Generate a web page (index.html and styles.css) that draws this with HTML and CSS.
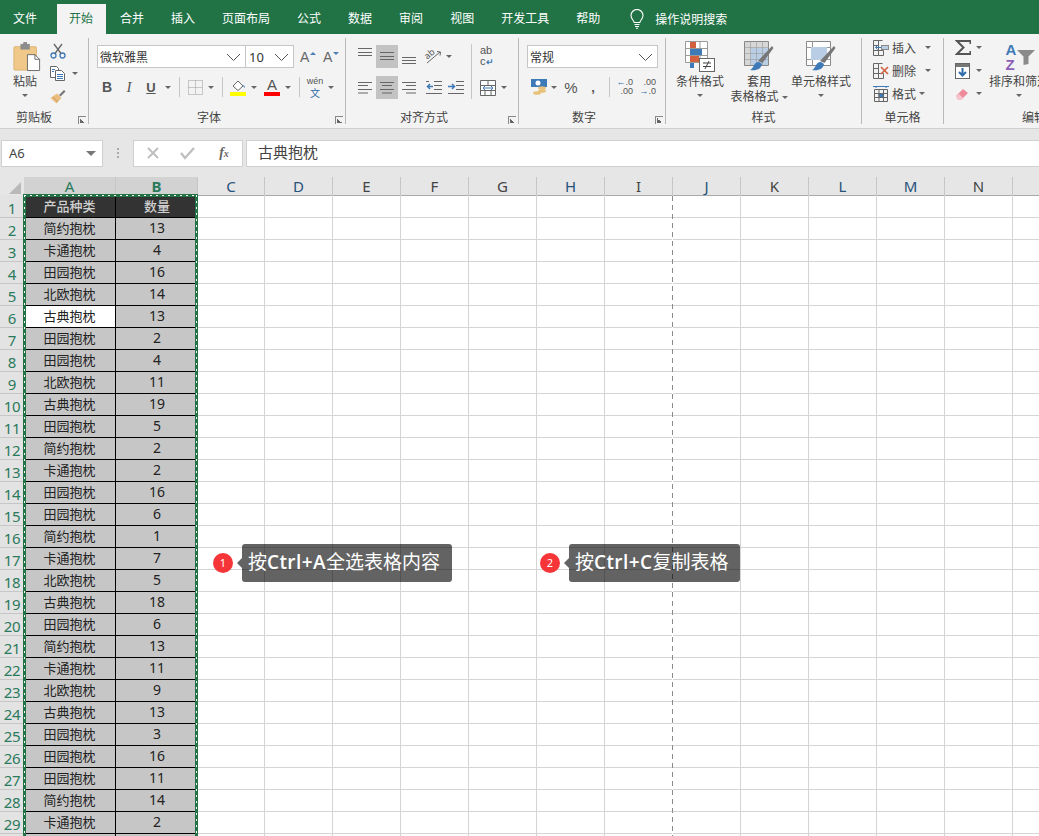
FILE: index.html
```html
<!DOCTYPE html>
<html lang="zh-CN">
<head>
<meta charset="utf-8">
<title>Excel</title>
<link rel="stylesheet" href="styles.css">
</head>
<body>
<div class="app">
<nav class="tabs">
  <span class="tab first">文件</span><span class="tab on">开始</span><span class="tab">合并</span><span class="tab">插入</span><span class="tab">页面布局</span><span class="tab">公式</span><span class="tab">数据</span><span class="tab">审阅</span><span class="tab">视图</span><span class="tab">开发工具</span><span class="tab">帮助</span>
  <span class="search">
    <svg width="14" height="20" viewBox="0 0 14 20" fill="none" stroke="#fff" stroke-width="1.1"><path d="M4.2 13.5C3.6 11 1 9.6 1 6.5a6 6 0 0 1 12 0c0 3.100-2.600 4.500-3.200 7z"/><path d="M4.500 15.500h5M5 17.500h4M6 19.300h2"/></svg>
    <span>操作说明搜索</span>
  </span>
</nav>

<section class="ribbon">
  <!-- 剪贴板 -->
  <div class="group g1">
    <div class="body flex">
      <div class="large paste">
        <svg width="28" height="30" viewBox="0 0 30 32"><rect x="1" y="5" width="24" height="25" rx="1" fill="#f0c98a" stroke="#dcb06a"/><rect x="8" y="2" width="10" height="6" fill="#8c8c8c"/><rect x="11" y="0" width="4" height="3" fill="#8c8c8c"/><path d="M15.500 13.500h8l5 5v12h-13z" fill="#fff" stroke="#666"/><path d="M23.500 13.500v5h5" fill="none" stroke="#666"/></svg>
        <span class="lbl">粘贴</span>
        <i class="caret"></i>
      </div>
      <div class="col clip-tools">
        <span class="tool"><svg width="16" height="16" viewBox="0 0 16 16" fill="none" stroke="#3f7ab8" stroke-width="1.300"><circle cx="3.500" cy="12.500" r="2.500"/><circle cx="12.500" cy="12.500" r="2.500"/><path d="M5 10.500 12 1M11 10.500 4 1" stroke="#666"/></svg></span>
        <span class="tool copy"><svg width="16" height="15" viewBox="0 0 16 15" fill="#fff" stroke="#666"><path d="M.500.500h6l2 2v9h-8z"/><path d="M5.500 4.500h6l3 3v7h-9z"/><path d="M7 8.500h6M7 10.500h6M7 12.500h6M2 3.500h3M2 5.500h2" stroke="#3f7ab8" fill="none"/></svg><i class="caret"></i></span>
        <span class="tool"><svg width="16" height="15" viewBox="0 0 16 15"><path d="M9 6 14 1l1.500 1.500-5 5z" fill="#777"/><path d="M.500 9 7 4.500l4.500 4.500-5 5.500z" fill="#e9bd7d"/><path d="M3 8 8 13" stroke="#c79d60"/></svg></span>
      </div>
    </div>
    <div class="label lab-clip">剪贴板</div>
    <i class="launcher"></i>
  </div>

  <!-- 字体 -->
  <div class="group g2">
    <div class="body pad8">
      <div class="line first-line">
        <span class="combo font">微软雅黑<svg class="chev" width="15" height="8" viewBox="0 0 15 8" fill="none" stroke="#555"><path d="M1 1l6.500 6.500L14 1"/></svg></span><span class="combo size">10<svg class="chev" width="15" height="8" viewBox="0 0 15 8" fill="none" stroke="#555"><path d="M1 1l6.500 6.500L14 1"/></svg></span>
        <span class="fontsize up">A</span><span class="fontsize down">A</span>
      </div>
      <div class="line second-line">
        <span class="c w20 fmt b">B</span><span class="c w24 fmt it">I</span><span class="c w20 fmt ul">U</span><span class="c w14"><i class="caret"></i></span><span class="c w8"><i class="vsep"></i></span>
        <span class="c w24"><svg width="15" height="15" viewBox="0 0 15 15" fill="none" stroke="#999" stroke-dasharray="1 1"><path d="M.500.500h14v14H.500zM7.500.500v14M.500 7.500h14"/></svg></span><span class="c w8"><i class="caret"></i></span><span class="c w14"><i class="vsep"></i></span>
        <span class="c w18"><svg width="17" height="17" viewBox="0 0 17 17"><path d="M3 7 8 2l5 5-5 4.500z" fill="#fff" stroke="#666"/><path d="M12 6c2 0 3 1 3 3z" fill="#3f7ab8"/><rect x="0" y="13" width="16" height="4" fill="#ffff00"/></svg></span><span class="c w14"><i class="caret"></i></span>
        <span class="c w22 colora"><span class="acolor">A</span></span><span class="c w10"><i class="caret"></i></span><span class="c w12"><i class="vsep"></i></span>
        <span class="c w20 wen"><span>wén</span><span class="wenz">文</span></span><span class="c w12"><i class="caret"></i></span>
      </div>
    </div>
    <div class="label lab-side">字体</div>
    <i class="launcher"></i>
  </div>

  <!-- 对齐方式 -->
  <div class="group g3">
    <div class="body flex pad8">
      <div class="alignleft">
        <div class="line first-line">
          <span class="c w22 a23"><svg width="14" height="23" viewBox="0 0 14 23" stroke="#666"><path d="M0 3.500h14M0 7.500h14M0 10.500h14"/></svg></span>
          <span class="c w22 a23 act"><svg width="14" height="23" viewBox="0 0 14 23" stroke="#666"><path d="M0 7.500h14M0 11.500h14M0 14.500h14"/></svg></span>
          <span class="c w22 a23"><svg width="14" height="23" viewBox="0 0 14 23" stroke="#666"><path d="M0 12.500h14M0 15.500h14M0 18.500h14"/></svg></span>
          <span class="c w26 a23"><svg class="orient" width="17" height="15" viewBox="0 0 17 15" fill="none" stroke="#666"><path d="M2 14 15 3M12 2.500l3.500.5-.5 3.500" stroke-width="1"/><text x="1" y="9" font-size="9" fill="#555" stroke="none" transform="rotate(-40 4 8)">ab</text></svg></span>
          <span class="c w6 a23"><i class="caret"></i></span>
        </div>
        <div class="line a-second">
          <span class="c w22 a23"><svg width="14" height="12" viewBox="0 0 14 12" stroke="#666"><path d="M0 .500h14M0 3.500h10M0 7.500h14M0 11h10"/></svg></span>
          <span class="c w22 a23 act"><svg width="14" height="12" viewBox="0 0 14 12" stroke="#666"><path d="M0 .500h14M2 3.500h10M0 7.500h14M2 11h10"/></svg></span>
          <span class="c w22 a23"><svg width="14" height="12" viewBox="0 0 14 12" stroke="#666"><path d="M0 .500h14M4 3.500h10M0 7.500h14M4 11h10"/></svg></span>
          <span class="c w28 a23"><svg width="16" height="13" viewBox="0 0 16 13" fill="none"><path d="M8 .500h8M8 4.500h8M8 8.500h8M0 12.500h16M0 .500h3" stroke="#666"/><path d="M7 5.500H2M4 3 1.500 5.500 4 8" stroke="#3f7ab8" stroke-width="1.500"/></svg></span>
          <span class="c w16 a23"><svg width="16" height="13" viewBox="0 0 16 13" fill="none"><path d="M8 .500h8M8 4.500h8M8 8.500h8M0 12.500h16" stroke="#666"/><path d="M0 5.500h6M4 3l2.500 2.500L4 8" stroke="#3f7ab8" stroke-width="1.500"/></svg></span>
        </div>
      </div>
      <i class="vsep tall"></i>
      <div class="alignright">
        <div class="line first-line">
          <span class="wrap">ab<br>c<b>↵</b></span>
        </div>
        <div class="line a-second">
          <span class="c w16 a23"><svg width="16" height="16" viewBox="0 0 16 16" fill="#fff" stroke="#666"><path d="M.500.500h15v15H.500zM.500 5.500h15M.500 10.500h15M8 .500v5M5 10.500v5M11 10.500v5"/><path d="M3 8h10M5 6l-2 2 2 2M11 6l2 2-2 2" stroke="#3f7ab8" fill="none"/></svg></span>
          <span class="c w16 a23"><i class="caret"></i></span>
        </div>
      </div>
    </div>
    <div class="label lab-side">对齐方式</div>
    <i class="launcher"></i>
  </div>

  <!-- 数字 -->
  <div class="group g4">
    <div class="body pad8">
      <div class="line first-line"><span class="combo num">常规<svg class="chev" width="15" height="8" viewBox="0 0 15 8" fill="none" stroke="#555"><path d="M1 1l6.500 6.500L14 1"/></svg></span></div>
      <div class="line second-line">
        <span class="c w24"><svg width="18" height="16" viewBox="0 0 18 16"><rect x="1" y="0" width="16" height="8" fill="#3f7ab8"/><circle cx="8" cy="4" r="2.500" fill="#fff"/><ellipse cx="12" cy="9" rx="4" ry="1.800" fill="#e8c27a"/><ellipse cx="12" cy="12" rx="4" ry="1.800" fill="#e8c27a"/><ellipse cx="7" cy="14" rx="4" ry="1.800" fill="#e8c27a"/></svg></span><span class="c w6"><i class="caret"></i></span>
        <span class="c w28 pct">%</span><span class="c w16 comma">,</span><span class="c w16"><i class="vsep"></i></span>
        <span class="c w16 dec"><span class="d1"><em>←</em>.0</span><span class="d2">.00</span></span><span class="c w7"></span>
        <span class="c w16 dec"><span class="d1">.00</span><span class="d2"><em>→</em>.0</span></span>
      </div>
    </div>
    <div class="label lab-side">数字</div>
    <i class="launcher"></i>
  </div>

  <!-- 样式 -->
  <div class="group g5">
    <div class="body flex">
      <div class="large w68">
        <svg width="30" height="32" viewBox="0 0 30 32"><path d="M.500.500h22v21H.500zM.500 7.500h22M.500 14.500h22M8 .500v21M15 .500v21" fill="#fff" stroke="#999"/><rect x="5" y="1" width="6" height="6" fill="#d2603f"/><rect x="5" y="8" width="12" height="6" fill="#3f7ab8"/><rect x="5" y="15" width="9" height="6" fill="#d2603f"/><rect x="5" y="22" width="4" height="5" fill="#3f7ab8"/><rect x="14.500" y="17.500" width="15" height="13" fill="#fff" stroke="#666"/><path d="M18 22h8M18 25.500h8M24 20l-4 8" stroke="#444" fill="none"/></svg>
        <span class="lbl">条件格式</span><i class="caret"></i>
      </div>
      <div class="large w50">
        <svg width="30" height="32" viewBox="0 0 30 32"><path d="M.500.500h24v24H.500z" fill="#fff" stroke="#888"/><path d="M1 1h23v6H1zM1 1h6v23H1z" fill="#d6d6d6"/><rect x="7" y="7" width="17" height="17" fill="#b9cde4"/><path d="M.500 6.500h24M.500 12.500h24M.500 18.500h24M6.500.500v24M12.500.500v24M18.500.500v24" stroke="#999" fill="none" stroke-opacity=".6"/><path d="M14 20 28 5l1.500 2-11 15z" fill="#777"/><path d="M6 29c4-1 3-8 9-8l3 2c-1 5-5 7-12 6z" fill="#3f7ab8"/></svg>
        <span class="lbl">套用</span>
        <span class="lbl wcaret">表格格式<i class="caret"></i></span>
      </div>
      <div class="large w74">
        <svg width="30" height="32" viewBox="0 0 30 32"><path d="M.500.500h24v24H.500z" fill="#fff" stroke="#888"/><path d="M.500 6.500h24M.500 18.500h24M6.500.500v24" stroke="#999" fill="none"/><rect x="5" y="6" width="16" height="13" fill="#b9cde4"/><path d="M14 20 28 5l1.500 2-11 15z" fill="#777"/><path d="M6 29c4-1 3-8 9-8l3 2c-1 5-5 7-12 6z" fill="#3f7ab8"/></svg>
        <span class="lbl">单元格样式</span><i class="caret"></i>
      </div>
    </div>
    <div class="label">样式</div>
  </div>

  <!-- 单元格 -->
  <div class="group g6">
    <div class="body cells">
      <div class="cellrow"><svg width="16" height="16" viewBox="0 0 16 16" fill="none" stroke="#666"><path d="M.500.500h5v15h-5zM.500 5.500h5M.500 10.500h5M5.500 10.500h5v5h-5zM5.500.500h4"/><rect x="8.500" y="5.500" width="7" height="4" fill="#b9cde4" stroke="#888"/><path d="M8 7.500H2.500M4.500 5.500l-2 2 2 2" stroke="#3f7ab8"/></svg><span>插入</span><i class="caret wide"></i></div>
      <div class="cellrow"><svg width="16" height="16" viewBox="0 0 16 16" fill="none" stroke="#666"><path d="M.500.500h5v15h-5zM.500 5.500h5M.500 10.500h5M5.500 10.500h5v5h-5zM5.500.500h4"/><path d="M8 4l7 7M15 4l-7 7" stroke="#d2603f" stroke-width="1.600"/></svg><span>删除</span><i class="caret wide"></i></div>
      <div class="cellrow"><svg width="16" height="16" viewBox="0 0 16 16" fill="none" stroke="#666"><path d="M1.500 3.500h13v12h-13zM1.500 7.500h13M1.500 11.500h13M6 3.500v12M10.500 3.500v12"/><rect x="6" y="7.500" width="4.500" height="4" fill="#3f7ab8"/><path d="M0 .500h16M3 0v2M13 0v2" stroke="#3f7ab8"/></svg><span>格式</span><i class="caret"></i></div>
    </div>
    <div class="label">单元格</div>
  </div>

  <!-- 编辑 -->
  <div class="group g7">
    <div class="body flex">
      <div class="col edit-tools">
        <span class="tool sigma"><svg width="16" height="15" viewBox="0 0 16 15" fill="none" stroke="#555" stroke-width="2"><path d="M15.500 4V1H2l6.500 6.500L2 14h13.500v-3"/></svg><i class="caret"></i></span>
        <span class="tool down"><svg width="15" height="16" viewBox="0 0 15 16"><rect x=".5" y=".5" width="14" height="15" fill="#fff" stroke="#666"/><rect x="1" y="1" width="13" height="3" fill="#777"/><path d="M7.500 5v7M4 9l3.500 3.500L11 9" fill="none" stroke="#2f6cab" stroke-width="2"/></svg><i class="caret"></i></span>
        <span class="tool"><svg width="15" height="14" viewBox="0 0 15 14"><path d="M1 9 8 2l5 4-7 7H3z" fill="#ef8a9a"/><path d="M1 9l2 4h3l2-2-4-4z" fill="#f7c5cd"/></svg><i class="caret"></i></span>
      </div>
      <div class="large sort">
        <span class="azf"><span class="az"><b class="az-a">A</b><b class="az-z">Z</b></span><svg width="18" height="15" viewBox="0 0 18 15"><path d="M0 0h18l-6.500 6.500V14l-5 1V6.500z" fill="#8a8a8a"/></svg></span>
        <span class="lbl">排序和筛选</span><i class="caret"></i>
      </div>
    </div>
    <div class="label">编辑</div>
  </div>
</section>

<section class="formula">
  <div class="namebox"><span>A6</span><i class="caret dark"></i></div>
  <span class="dots"></span>
  <div class="fbtns">
    <svg width="14" height="14" viewBox="0 0 14 14" stroke="#bfbfbf" stroke-width="2"><path d="M2 2l10 10M12 2 2 12"/></svg>
    <svg width="15" height="14" viewBox="0 0 15 14" fill="none" stroke="#bfbfbf" stroke-width="2.400"><path d="M1 7l4 5 9-10"/></svg>
    <span class="fx">f<small>x</small></span>
  </div>
  <div class="input">古典抱枕</div>
</section>

<section class="sheet">
  <div class="colhead">
    <div class="corner"><svg width="12" height="12" viewBox="0 0 12 12"><path d="M12 0v12H0z" fill="#b9b9b9"/></svg></div>
    <div class="ch sel a">A</div><div class="ch sel b">B</div><div class="ch c1 blue">C</div><div class="ch blue">D</div><div class="ch">E</div><div class="ch">F</div><div class="ch">G</div><div class="ch blue">H</div><div class="ch">I</div><div class="ch blue">J</div><div class="ch">K</div><div class="ch blue">L</div><div class="ch blue">M</div><div class="ch">N</div><div class="ch rest"></div>
  </div>
  <div class="row head"><div class="rh">1</div><div class="ca">产品种类</div><div class="cb">数量</div><div class="fill"></div></div>
  <div class="row"><div class="rh">2</div><div class="ca">简约抱枕</div><div class="cb">13</div><div class="fill"></div></div>
  <div class="row"><div class="rh">3</div><div class="ca">卡通抱枕</div><div class="cb">4</div><div class="fill"></div></div>
  <div class="row"><div class="rh">4</div><div class="ca">田园抱枕</div><div class="cb">16</div><div class="fill"></div></div>
  <div class="row"><div class="rh">5</div><div class="ca">北欧抱枕</div><div class="cb">14</div><div class="fill"></div></div>
  <div class="row active"><div class="rh">6</div><div class="ca">古典抱枕</div><div class="cb">13</div><div class="fill"></div></div>
  <div class="row"><div class="rh">7</div><div class="ca">田园抱枕</div><div class="cb">2</div><div class="fill"></div></div>
  <div class="row"><div class="rh">8</div><div class="ca">田园抱枕</div><div class="cb">4</div><div class="fill"></div></div>
  <div class="row"><div class="rh">9</div><div class="ca">北欧抱枕</div><div class="cb">11</div><div class="fill"></div></div>
  <div class="row"><div class="rh">10</div><div class="ca">古典抱枕</div><div class="cb">19</div><div class="fill"></div></div>
  <div class="row"><div class="rh">11</div><div class="ca">田园抱枕</div><div class="cb">5</div><div class="fill"></div></div>
  <div class="row"><div class="rh">12</div><div class="ca">简约抱枕</div><div class="cb">2</div><div class="fill"></div></div>
  <div class="row"><div class="rh">13</div><div class="ca">卡通抱枕</div><div class="cb">2</div><div class="fill"></div></div>
  <div class="row"><div class="rh">14</div><div class="ca">田园抱枕</div><div class="cb">16</div><div class="fill"></div></div>
  <div class="row"><div class="rh">15</div><div class="ca">田园抱枕</div><div class="cb">6</div><div class="fill"></div></div>
  <div class="row"><div class="rh">16</div><div class="ca">简约抱枕</div><div class="cb">1</div><div class="fill"></div></div>
  <div class="row"><div class="rh">17</div><div class="ca">卡通抱枕</div><div class="cb">7</div><div class="fill"></div></div>
  <div class="row"><div class="rh">18</div><div class="ca">北欧抱枕</div><div class="cb">5</div><div class="fill"></div></div>
  <div class="row"><div class="rh">19</div><div class="ca">古典抱枕</div><div class="cb">18</div><div class="fill"></div></div>
  <div class="row"><div class="rh">20</div><div class="ca">田园抱枕</div><div class="cb">6</div><div class="fill"></div></div>
  <div class="row"><div class="rh">21</div><div class="ca">简约抱枕</div><div class="cb">13</div><div class="fill"></div></div>
  <div class="row"><div class="rh">22</div><div class="ca">卡通抱枕</div><div class="cb">11</div><div class="fill"></div></div>
  <div class="row"><div class="rh">23</div><div class="ca">北欧抱枕</div><div class="cb">9</div><div class="fill"></div></div>
  <div class="row"><div class="rh">24</div><div class="ca">古典抱枕</div><div class="cb">13</div><div class="fill"></div></div>
  <div class="row"><div class="rh">25</div><div class="ca">田园抱枕</div><div class="cb">3</div><div class="fill"></div></div>
  <div class="row"><div class="rh">26</div><div class="ca">田园抱枕</div><div class="cb">16</div><div class="fill"></div></div>
  <div class="row"><div class="rh">27</div><div class="ca">田园抱枕</div><div class="cb">11</div><div class="fill"></div></div>
  <div class="row"><div class="rh">28</div><div class="ca">简约抱枕</div><div class="cb">14</div><div class="fill"></div></div>
  <div class="row"><div class="rh">29</div><div class="ca">卡通抱枕</div><div class="cb">2</div><div class="fill"></div></div>
  <div class="row"><div class="rh"></div><div class="ca"></div><div class="cb"></div><div class="fill"></div></div>

  <div class="copy-range"></div>
  <div class="page-break"></div>
  <div class="note note1"><span class="num-badge">1</span><span class="bubble">按<span class="lat">Ctrl+A</span>全选表格内容</span></div>
  <div class="note note2"><span class="num-badge">2</span><span class="bubble">按<span class="lat">Ctrl+C</span>复制表格</span></div>
</section>
</div>
</body>
</html>
```

FILE: styles.css
```css
* { box-sizing: border-box; }
html, body { margin: 0; padding: 0; height: 100%; overflow: hidden; }
body { font-family: "Noto Sans", "Noto Sans CJK SC", "Liberation Sans", sans-serif; font-size: 12px; color: #444; background: #fff; }
.app { width: 1039px; height: 836px; overflow: hidden; display: flex; flex-direction: column; }
i { display: block; font-style: normal; }

/* tabs */
.tabs { height: 34px; background: #217346; display: flex; align-items: flex-end; gap: 2px; color: #fff; flex: none; }
.tab { height: 30px; line-height: 29px; padding: 0 13px 0 12px; font-size: 12px; }
.tab.first { margin-left: 1px; margin-right: 5px; }
.tab.on { background: #f3f3f3; color: #217346; }
.search { height: 30px; display: flex; align-items: center; gap: 11px; margin-left: 15px; font-size: 12px; }

/* ribbon */
.ribbon { height: 95px; flex: none; background: #f3f3f3; border-bottom: 1px solid #cfcfcf; display: flex; overflow: hidden; padding-top: 4px; }
.group { position: relative; height: 86px; border-right: 1px solid #b9b9b9; flex: none; display: flex; flex-direction: column; }
.g1 { width: 89px; } .g2 { width: 257px; } .g3 { width: 173px; } .g4 { width: 147px; } .g5 { width: 196px; } .g6 { width: 82px; } .g7 { width: 180px; border-right: 0; }
.body { height: 71px; flex: none; }
.flex { display: flex; }
.pad8 { padding-left: 8px; }
.label { text-align: center; line-height: 18px; height: 15px; font-size: 12px; color: #444; }
.lab-side { padding-right: 16px; }
.lab-clip { padding-right: 20px; }
.launcher { position: absolute; right: 2px; bottom: 0; width: 8px; height: 8px; border-left: 1px solid #888; border-top: 1px solid #888; }
.launcher::after { content: ""; position: absolute; left: 1px; top: 1px; width: 5px; height: 5px; background: linear-gradient(45deg, #666 50%, transparent 50%); }

.caret { width: 0; height: 0; border-left: 3.500px solid transparent; border-right: 3.500px solid transparent; border-top: 3.500px solid #666; flex: none; }
.caret.dark { border-left-width: 5px; border-right-width: 5px; border-top-width: 5px; border-top-color: #777; }

.large { display: flex; flex-direction: column; align-items: center; padding-top: 3px; flex: none; }
.large svg { flex: none; }
.lbl { line-height: 18px; height: 16px; white-space: nowrap; font-size: 12px; color: #444; flex: none; }
.large > .caret { margin-top: 5px; }
.wcaret { display: flex; align-items: center; gap: 3px; }
.paste { width: 50px; }
.paste svg { margin: 1px 0 1px 3px; }
.w68 { width: 68px; } .w50 { width: 50px; } .w74 { width: 74px; }

.col { display: flex; flex-direction: column; }
.clip-tools { padding-top: 1px; }
.tool { display: flex; align-items: center; height: 23px; gap: 6px; }

.line { display: flex; align-items: center; }
.first-line { margin-top: 7px; height: 23px; }
.second-line { margin-top: 9px; height: 20px; }
.a-second { margin-top: 8px; height: 23px; }
.c { display: flex; align-items: center; justify-content: center; height: 20px; flex: none; }
.w6 { width: 6px; } .w7 { width: 7px; } .w8 { width: 8px; } .w10 { width: 10px; } .w12 { width: 12px; } .w14 { width: 14px; } .w16 { width: 16px; } .w18 { width: 18px; } .w20 { width: 20px; } .w22 { width: 22px; } .w24 { width: 24px; } .w26 { width: 26px; } .w28 { width: 28px; }
.a23 { height: 23px; }
.act { background: #c3c3c3; }
.vsep { width: 1px; height: 20px; background: #c6c6c6; }
.vsep.tall { height: 55px; margin: 6px 0 0 0; }
.orient { overflow: visible; }

.combo { display: flex; align-items: center; justify-content: space-between; height: 23px; background: #fff; border: 1px solid #c6c6c6; font-size: 12px; color: #333; padding: 0 4px 0 2px; flex: none; }
.font { width: 149px; }
.size { width: 48px; border-left: 0; padding-left: 3px; font-size: 13px; }
.num { width: 131px; }
.fontsize { position: relative; font-family: "Liberation Sans", sans-serif; font-size: 14px; color: #666; width: 12px; flex: none; }
.fontsize.up { margin-left: 6px; }
.fontsize.down { margin-left: 11px; }
.fontsize::after { content: ""; position: absolute; right: -4px; top: 3px; border-left: 3px solid transparent; border-right: 3px solid transparent; }
.fontsize.up::after { border-bottom: 3px solid #4a7fb5; }
.fontsize.down::after { border-top: 3px solid #4a7fb5; }

.fmt { font-family: "Liberation Sans", sans-serif; font-size: 14px; color: #555; }
.b { font-weight: bold; }
.it { font-family: "Liberation Serif", serif; font-style: italic; font-size: 15px; }
.ul { font-weight: bold; text-decoration: underline; font-size: 13px; }
.acolor { font-family: "Liberation Sans", sans-serif; font-size: 15px; line-height: 14px; color: #555; border-bottom: 4px solid #f00; height: 18px; width: 16px; display: block; text-align: center; }
.wen { flex-direction: column; font-family: "Liberation Sans", sans-serif; font-size: 9px; line-height: 11px; color: #555; }
.wenz { font-family: "Noto Sans CJK SC", sans-serif; color: #2f6cab; font-size: 10px; }

.alignleft { width: 117px; flex: none; }
.alignright { padding-left: 8px; }
.wrap { font-family: "Liberation Sans", sans-serif; font-size: 11px; line-height: 11px; color: #555; }
.wrap b { color: #3f7ab8; font-size: 9px; }

.pct { font-family: "Liberation Sans", sans-serif; font-size: 15px; color: #555; }
.comma { font-family: "Liberation Sans", sans-serif; font-weight: bold; font-size: 13px; color: #555; }
.dec { flex-direction: column; font-family: "Liberation Sans", sans-serif; font-size: 9px; line-height: 9px; color: #555; align-items: flex-end; }
.dec em { font-style: normal; color: #2f6cab; font-weight: bold; }

.cells { margin-top: -2px; height: 73px; }
.cellrow { display: flex; align-items: center; height: 23px; padding-left: 11px; gap: 3px; font-size: 12px; color: #444; }
.cellrow .caret { margin-left: 0; }
.cellrow .caret.wide { margin-left: 6px; }
.edit-tools { padding-left: 11px; width: 43px; flex: none; margin-top: -2px; }
.tool.sigma { gap: 5px; }
.sort { width: 60px; margin-left: 2px; }
.azf { display: flex; align-items: center; height: 32px; padding-left: 3px; }
.az { display: flex; flex-direction: column; font-family: "Liberation Sans", sans-serif; font-size: 15px; line-height: 15px; margin-right: 1px; }
.az b { font-weight: 700; }
.az-a { color: #3f7ab8; }
.az-z { color: #8e5fb5; }

/* formula bar */
.formula { height: 48px; flex: none; background: #e6e6e6; display: flex; align-items: center; padding: 0 0 0 1px; }
.namebox { width: 102px; height: 27px; background: #fff; border: 1px solid #d0d0d0; display: flex; align-items: center; justify-content: space-between; padding: 0 6px 0 7px; font-size: 13px; color: #444; }
.dots { width: 2px; height: 10px; margin: 0 14px; background: repeating-linear-gradient(#aaa 0 2px, transparent 2px 4px); }
.fbtns { width: 110px; height: 27px; background: #fff; border: 1px solid #d0d0d0; display: flex; align-items: center; justify-content: space-between; padding: 0 9px 0 12px; }
.fx { font-family: "Liberation Serif", serif; font-style: italic; font-weight: bold; font-size: 14px; color: #666; width: 18px; text-align: center; }
.fx small { font-size: 10px; }
.input { flex: 1; height: 27px; background: #fff; border: 1px solid #d0d0d0; margin-left: 3px; padding-left: 11px; font-size: 15px; line-height: 23px; color: #444; border-right: 0; }

/* sheet */
.sheet { position: relative; flex: 1; overflow: hidden; background: #fff; }
.colhead { display: flex; height: 19px; background: #e6e6e6; border-bottom: 1px solid #a9a9a9; }
.corner { width: 24px; display: flex; align-items: flex-end; justify-content: flex-end; padding: 0 3px 1px 0; flex: none; }
.ch { width: 68px; flex: none; border-right: 1px solid #c6c6c6; text-align: center; font-size: 15px; line-height: 18px; color: #444; }
.ch.blue { color: #25517a; }
.ch.sel { background: #d2d2d2; color: #2b7a5c; }
.ch.a { width: 92px; }
.ch.b { width: 82px; }
.ch.c1 { width: 67px; }
.ch.rest { flex: 1; border-right: 0; }

.row { display: flex; height: 22px; }
.row.head { height: 23px; margin-top: -1px; }
.rh { width: 24px; flex: none; background: #e3e3e3; border-bottom: 1px solid #c6c6c6; color: #2b7a5c; font-size: 15px; line-height: 25px; text-align: center; letter-spacing: -.3px; overflow: hidden; }
.row.head .rh { line-height: 27px; }
.ca, .cb { flex: none; background: #c6c6c6; border-bottom: 1px solid #000; text-align: center; font-size: 13px; line-height: 20px; color: #222; }
.ca { width: 92px; border-right: 1px solid #000; }
.cb { width: 82px; font-size: 14px; }
.row.head .ca, .row.head .cb { background: #333; color: #cfcfcf; font-size: 13px; font-weight: 500; line-height: 22px; }
.row.active .ca { background: #fff; }
.fill { flex: 1; border-bottom: 1px solid #d4d4d4; background: linear-gradient(90deg, transparent 67px, #d4d4d4 67px) -1px 0 / 68px 100% repeat-x; }

.copy-range { position: absolute; left: 23px; top: 17px; width: 175px; height: 700px; border: 3px solid #217346; pointer-events: none; }
.copy-range::before { content: ""; position: absolute; inset: -2px; background:
  repeating-linear-gradient(90deg, #fff 0 2px, transparent 2px 6px) 0 0 / 100% 1px no-repeat,
  repeating-linear-gradient(#fff 0 2px, transparent 2px 6px) 0 0 / 1px 100% no-repeat,
  repeating-linear-gradient(#fff 0 2px, transparent 2px 6px) 100% 0 / 1px 100% no-repeat; }
.page-break { position: absolute; left: 672px; top: 19px; bottom: 0; width: 1px; background: repeating-linear-gradient(#8a8a8a 0 5px, #fff 5px 9px); }

.note { position: absolute; display: flex; align-items: center; }
.note1 { left: 213px; top: 367px; }
.note2 { left: 540px; top: 367px; }
.num-badge { width: 20px; height: 20px; border-radius: 50%; background: #f63538; color: #fff; font-size: 11px; line-height: 20px; text-align: center; flex: none; }
.bubble { position: relative; margin-left: 9px; height: 38px; line-height: 37px; padding: 0 12px 0 6px; background: rgba(0, 0, 0, .61); border-radius: 3px; color: #fff; font-size: 19px; white-space: nowrap; }
.bubble::before { content: ""; position: absolute; left: -5px; top: 14px; border-top: 5px solid transparent; border-bottom: 5px solid transparent; border-right: 5px solid rgba(0, 0, 0, .61); }
.lat { font-family: "Open Sans", sans-serif; font-weight: 600; letter-spacing: .4px; }
```
